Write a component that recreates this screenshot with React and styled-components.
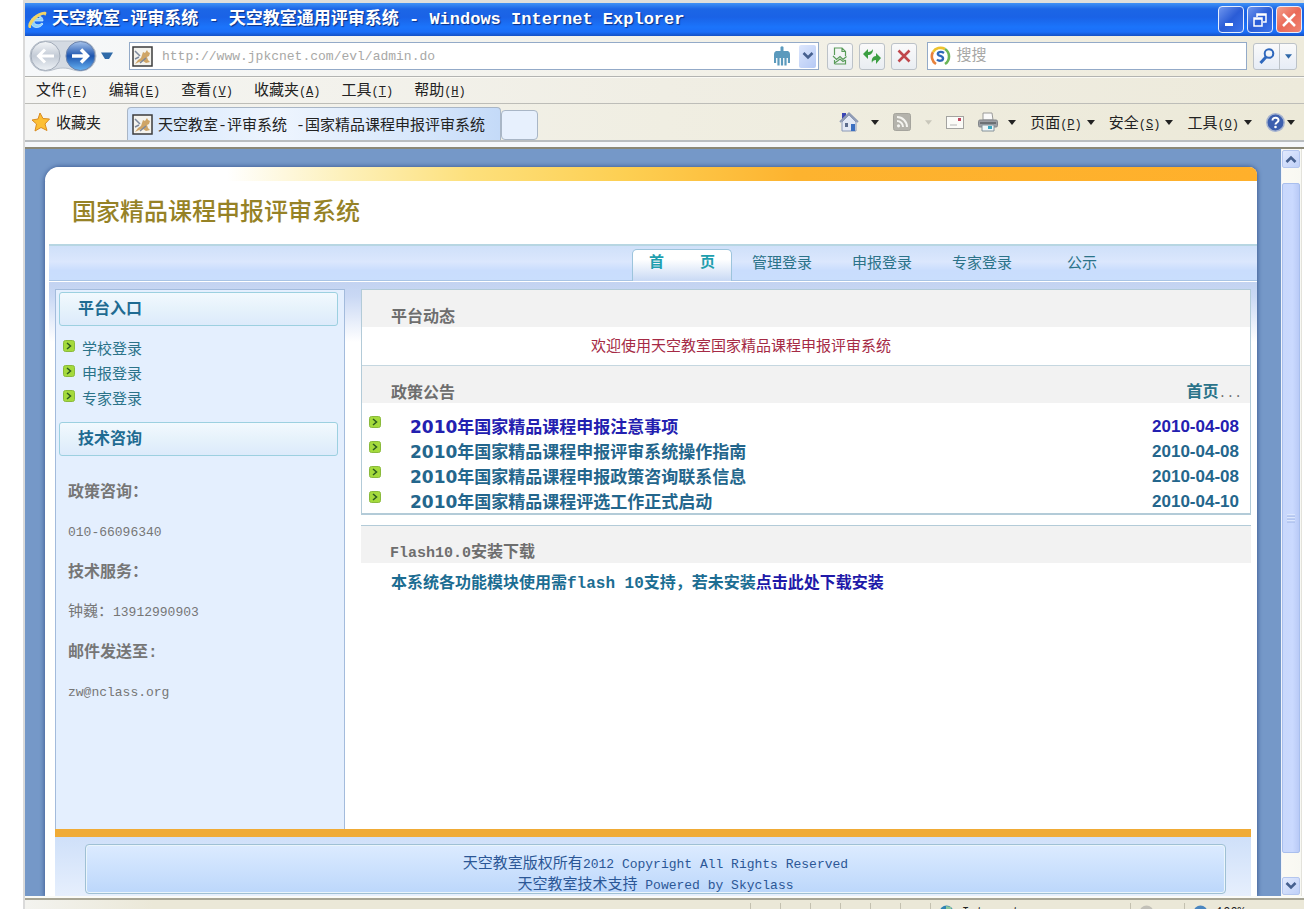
import styled, { createGlobalStyle } from "styled-components";

const GlobalStyle = createGlobalStyle`
  * {
    box-sizing: border-box;
  }
  body {
    margin: 0;
    background: #fff;
    font-family: "Liberation Mono", "Noto Sans CJK SC", monospace;
    font-size: 15px;
    line-height: 20px;
    color: #222;
  }
  button,
  input {
    font: inherit;
    color: inherit;
    margin: 0;
    padding: 0;
    border: 0;
    background: none;
  }
  a {
    color: inherit;
    text-decoration: none;
  }
  ul {
    margin: 0;
    padding: 0;
    list-style: none;
  }
  svg {
    display: block;
    flex: none;
  }
`;

/* ---------- browser window ---------- */

const Window = styled.div`
  display: flex;
  flex-direction: column;
  min-height: 100vh;
  margin-left: 23px;
  border-left: 2px solid #dadada;
  border-top: 3px solid #dfdfdb;
  background: #f0eee2;
`;
const TitleBar = styled.header`
  display: flex;
  align-items: center;
  justify-content: space-between;
  height: 33px;
  padding: 0 2px 0 1px;
  background: linear-gradient(
    #3f92f5 0,
    #1c66e6 6px,
    #1a62e6 14px,
    #1b74fb 24px,
    #1b6ef8 29px,
    #1450c4 33px
  );
`;
const TitleText = styled.div`
  display: flex;
  align-items: center;
  gap: 4px;
  font-size: 17px;
  font-weight: 700;
  color: #fff;
  text-shadow: 1px 1px 1px #0a2f86;
  white-space: nowrap;
`;
const WindowButtons = styled.div`
  display: flex;
  gap: 3px;
`;
const WindowButton = styled.button`
  display: flex;
  align-items: center;
  justify-content: center;
  width: 26px;
  height: 27px;
  border: 1px solid #e6eefc;
  border-radius: 4px;
  background: ${(p) =>
    p.$close
      ? "linear-gradient(135deg, #f3a08c, #ea6a58 50%, #f08472)"
      : "linear-gradient(135deg, #6f96ee, #2a5cd6 50%, #3a74ec)"};
`;
const AddressRow = styled.div`
  display: flex;
  align-items: center;
  height: 41px;
  padding: 0 7px 0 4px;
  border-bottom: 1px solid #b3b4b2;
  background: linear-gradient(90deg, #f6f8fa, #f2f0e6 60%, #eeebdc);
`;
const HistoryButtons = styled.div`
  display: flex;
  align-items: center;
  gap: 3px;
  width: 100px;
`;
const IconButton = styled.button`
  display: flex;
  align-items: center;
  justify-content: center;
`;
const FieldBox = styled.label`
  display: flex;
  align-items: center;
  flex: ${(p) => p.$grow} 1 0;
  min-width: 0;
  height: 28px;
  border: 1px solid #93aac8;
  background: #fff;
  padding: 0 2px;
  gap: ${(p) => p.$gap}px;
`;
const Field = styled.input`
  flex: 1;
  min-width: 0;
  height: 24px;
  font-size: ${(p) => p.$size}px;
  color: #a8a8a6;
  outline: none;
  &::placeholder {
    color: #a8a8a6;
    opacity: 1;
  }
`;
const SelectButton = styled(IconButton)`
  width: 17px;
  height: 23px;
  border-radius: 2px;
  background: linear-gradient(135deg, #dde7fd, #b5c9f5);
`;
const ToolButtons = styled.div`
  display: flex;
  gap: 6px;
  margin: 0 10px 0 8px;
`;
const ToolButton = styled(IconButton)`
  width: 26px;
  height: 27px;
  border: 1px solid #bcc2c8;
  border-radius: 3px;
  background: linear-gradient(#fafafa, #e9edf2);
`;
const SplitButton = styled.div`
  display: flex;
  height: 27px;
  margin-left: 6px;
  border: 1px solid #bcc2c8;
  border-radius: 3px;
  background: linear-gradient(#fafafa, #e6ecf6);
`;
const SplitPart = styled(IconButton)`
  width: ${(p) => p.$width}px;
  & + & {
    border-left: 1px solid #bcc2c8;
  }
`;
const MenuBar = styled.nav`
  display: flex;
  align-items: center;
  gap: 21px;
  height: 27px;
  padding: 3px 0 0 11px;
  border-top: 1px solid #fbfaf4;
  border-bottom: 1px solid #bdbdb8;
  background: linear-gradient(90deg, #f5f5f3, #f0eee4 50%, #edeadb);
`;
const Key = styled.span`
  font-size: 12px;
`;
const TabRow = styled.div`
  display: flex;
  align-items: flex-end;
  height: 38px;
  padding-right: 9px;
  border-bottom: 2px solid #b9bdc0;
  background: linear-gradient(90deg, #f4f4f2, #f0eee2 50%, #ece9d8);
`;
const Favorites = styled.button`
  display: flex;
  align-items: center;
  gap: 5px;
  width: 102px;
  height: 36px;
  padding-left: 6px;
`;
const TabText = styled.span`
  padding-top: 6px;
`;
const PageTab = styled.button`
  display: flex;
  align-items: center;
  gap: 5px;
  min-width: 374px;
  height: 33px;
  padding-left: 4px;
  border: 1px solid #a9b6c6;
  border-bottom: 0;
  border-radius: 4px 4px 0 0;
  background: linear-gradient(90deg, #d3e5fc, #eef5fe 40%, #d6e6fb 80%, #c4daf8);
  white-space: nowrap;
`;
const NewTab = styled.button`
  width: 37px;
  height: 30px;
  border: 1px solid #a9b6c6;
  border-radius: 4px;
  background: #e7f0fd;
`;
const CommandBar = styled.div`
  display: flex;
  flex: 1;
  align-items: center;
  justify-content: flex-end;
  gap: 14px;
  height: 36px;
`;
const Command = styled.button`
  display: flex;
  align-items: center;
  gap: ${(p) => p.$gap || 5}px;
`;
const TabStrip = styled.div`
  height: 7px;
  background: #f5f7fb;
  border-bottom: 2px solid #8b8877;
`;

/* ---------- viewport ---------- */

const Viewport = styled.div`
  display: flex;
  flex: 1;
  background: #7598c8;
`;
const ScrollTrack = styled.div`
  display: flex;
  flex-direction: column;
  width: 23px;
  padding: 1px 4px 1px 1px;
  background: linear-gradient(90deg, #f2f4fa 1px, #fbfaf4 1px, #f8f8f2 20px, #c8c6b8 20px, #fff 21px);
`;
const ScrollArrow = styled.button`
  display: flex;
  align-items: center;
  justify-content: center;
  height: 18px;
  border: 1px solid #b4c6ee;
  border-radius: 2px;
  background: linear-gradient(135deg, #e2eafe, #bfd0f8);
`;
const ScrollThumb = styled.div`
  display: flex;
  align-items: center;
  justify-content: center;
  flex: 1;
  margin: 15px 0 24px;
  border: 1px solid #a9bfee;
  border-radius: 2px;
  background: linear-gradient(90deg, #c9d8fc, #cad9fe 60%, #b9caf6);
`;
const Canvas = styled.div`
  display: flex;
  flex: 1;
  min-width: 0;
  padding: 18px 24px 0 20px;
`;
const Card = styled.div`
  display: flex;
  flex-direction: column;
  flex: 1;
  min-width: 0;
  border-radius: 15px 8px 0 0;
  background: #fff;
  box-shadow: 0 0 4px 1px #45649a;
  clip-path: inset(-6px -6px 0 -6px);
`;
const Banner = styled.div`
  height: 14px;
  border-radius: 15px 8px 0 0;
  background: linear-gradient(
    90deg,
    #fff 15%,
    #fdf0b8 25%,
    #fde07c 35%,
    #fdcf52 48%,
    #fdb32f 62%,
    #ffb02b
  );
`;
const SiteTitle = styled.h1`
  margin: 0;
  padding: 13px 27px 18px;
  font-size: 24px;
  line-height: 32px;
  font-weight: 500;
  font-family: "Noto Sans CJK SC", sans-serif;
  color: #968226;
`;
const NavBar = styled.nav`
  display: flex;
  align-items: flex-end;
  justify-content: flex-end;
  height: 37px;
  margin-left: 4px;
  padding-right: 125px;
  border-top: 2px solid #b7d6e2;
  background: linear-gradient(
    #cfe0f9,
    #dbe7fd 45%,
    #c9ddfd 70%,
    #c9defd 34px,
    #a9c4e4 34px
  );
`;
const NavLink = styled.a`
  width: 100px;
  height: ${(p) => (p.$active ? 32 : 31)}px;
  line-height: 28px;
  text-align: center;
  white-space: pre;
  font-weight: ${(p) => (p.$active ? 700 : 400)};
  color: ${(p) => (p.$active ? "#1f9fae" : "#2b7389")};
  border: ${(p) => (p.$active ? "1px solid #9cc4dc" : "1px solid transparent")};
  border-bottom: 0;
  border-radius: 5px 5px 0 0;
  background: ${(p) =>
    p.$active ? "linear-gradient(#fff 30%, #c8d9f4)" : "none"};
`;
const Body = styled.div`
  display: flex;
  flex: 1;
  margin-left: 4px;
  padding: 7px 6px 0;
  gap: 16px;
  border-top: 1px solid #fff;
  background: linear-gradient(#c3d3f1, #c9d8f4 14px, #fff 60px);
`;
const Sidebar = styled.aside`
  width: 290px;
  padding: 2px 6px 0 3px;
  border: 1px solid #a3bbdc;
  border-bottom: 0;
  background: #e4effe;
`;
const SideHeading = styled.h2`
  margin: 0;
  padding: 2px 0 0 18px;
  font-size: 16px;
  line-height: 30px;
  color: #1f6b92;
  border: 1px solid #9cd0e0;
  border-radius: 3px;
  background: linear-gradient(#f2f9fe, #e6f2fb 50%, #dceafb);
`;
const SideLinks = styled.ul`
  padding: 12px 0 9px 4px;
  color: #2b7389;
`;
const SideItem = styled.li`
  display: flex;
  align-items: center;
  gap: 7px;
  height: 25px;
`;
const Contact = styled.dl`
  margin: 0;
  padding: 17px 0 0 9px;
  color: #767676;
`;
const ContactName = styled.dt`
  font-size: 16px;
  font-weight: 700;
  line-height: 40px;
`;
const ContactValue = styled.dd`
  margin: 0;
  line-height: 40px;
`;
const Latin = styled.span`
  font-size: ${(p) => p.$size || 13}px;
`;
const Main = styled.main`
  flex: 1;
  min-width: 0;
  background: #fff;
`;
const Panel = styled.section`
  border: solid #b3cbd8;
  border-width: ${(p) => (p.$open ? "1px 0 0" : "1px 1px 2px")};
  margin-bottom: 10px;
`;
const PanelHeading = styled.div`
  display: flex;
  justify-content: space-between;
  align-items: flex-end;
  height: 37px;
  padding: 0 8px 0 29px;
  line-height: 18px;
  background: #f2f2f2;
  color: #6e6e6e;
`;
const PanelTitle = styled.h2`
  margin: 0;
  font-size: 16px;
`;
const MoreLink = styled.a`
  font-size: 16px;
  font-weight: 700;
  color: #2b7389;
`;
const Welcome = styled.p`
  margin: 0;
  padding: 4px 130px 0 0;
  line-height: 34px;
  text-align: center;
  color: #a52a45;
  border-bottom: 1px solid #c5d7e0;
`;
const Notices = styled.ul`
  padding: 10px 11px 0 7px;
  font-family: "DejaVu Sans", "Noto Sans CJK SC", sans-serif;
  font-size: 17px;
  font-weight: 700;
`;
const Notice = styled.li`
  display: flex;
  align-items: center;
  height: 25px;
  padding-top: 3px;
  color: ${(p) => (p.$fresh ? "#2320b0" : "#24668c")};
`;
const NoticeLink = styled.a`
  flex: 1;
  margin-left: 29px;
`;
const NoticeDate = styled.time`
  font-family: "Liberation Sans", sans-serif;
`;
const BulletWrap = styled.span`
  padding-bottom: 10px;
`;
const FlashNote = styled.p`
  margin: 0;
  padding: 9px 0 0 30px;
  font-size: 16px;
  line-height: 24px;
  font-weight: 700;
  color: #1c6d92;
`;
const DownloadLink = styled.a`
  color: #2019a8;
`;
const Footer = styled.footer`
  margin: 0 6px 0 10px;
  padding: 7px 25px 2px 30px;
  border-top: 8px solid #f0ab36;
  background: linear-gradient(#cfe0f9, #e6effd);
`;
const FooterBox = styled.div`
  padding: 9px 0 0;
  height: 50px;
  line-height: 21px;
  text-align: center;
  color: #2b5796;
  border: 1px solid #9fc0d4;
  border-radius: 4px;
  box-shadow: inset 0 0 0 1px #eaf5fb;
  background: linear-gradient(#dcebff, #bcd7fb);
`;
const StatusBar = styled.div`
  flex: none;
  display: flex;
  justify-content: flex-end;
  height: 13px;
  overflow: hidden;
  border-top: 2px solid #fbfbf7;
  box-shadow: inset 0 2px 0 #a7a595;
  background: linear-gradient(90deg, #f3f3ef, #ebe8d8 10%, #ebe8d8);
`;
const StatusCell = styled.div`
  display: flex;
  align-items: flex-start;
  gap: 8px;
  width: ${(p) => p.$width}px;
  height: 26px;
  margin-top: 5px;
  padding: 2px 0 0 8px;
  border-left: 1px solid #c3c0b0;
  font-size: 12px;
  line-height: 16px;
`;

/* ---------- icons ---------- */

const Caret = ({ color = "#222", size = 8 }) => (
  <svg width={size} height="5" viewBox="0 0 8 5">
    <path d="M0 0h8L4 5z" fill={color} />
  </svg>
);

const Bullet = () => (
  <svg width="12" height="12" viewBox="0 0 12 12">
    <rect x=".5" y=".5" width="11" height="11" rx="2" fill="#a4da3c" stroke="#8aba3c" />
    <path d="M4 3l3.500 3L4 9" fill="none" stroke="#2c5a20" strokeWidth="1.500" />
  </svg>
);

const SiteIcon = () => (
  <svg width="21" height="21" viewBox="0 0 21 21">
    <rect x="1" y="1" width="19" height="19" fill="#f4f3ee" stroke="#3c3c3c" strokeWidth="1.500" />
    <path d="M11 6l2 1 2-3 1 2 2 1-1 3-2 1 1 3 2 2-4 1-3-2-4 1-4 2 3-4 3-2 1-3z" fill="#cfa566" />
    <path d="M3 5l5 5M8 17l6-5M3 13l4-2" stroke="#7d889c" strokeWidth="1.500" fill="none" />
  </svg>
);

const IeLogo = () => (
  <svg width="22" height="22" viewBox="0 0 22 22">
    <path
      d="M17 12H8c0 4 5 5 8 2l1 1c-4 6-13 4-12-3 1-6 12-8 12 0zM9 9.500h5c0-3-4-3-5 0z"
      fill="#8fd3fb"
      stroke="#d9f1ff"
      strokeWidth=".7"
    />
    <path d="M3 19C-1 14 12 1 20 3c1 1 0 3-1 4 0-5-15 5-14 12z" fill="#f0d468" />
  </svg>
);

const History = () => (
  <svg width="68" height="34" viewBox="0 0 68 34">
    <defs>
      <linearGradient id="back" x1="0" y1="0" x2="0" y2="1">
        <stop offset="0" stopColor="#f4f6f8" />
        <stop offset=".5" stopColor="#c3cbd6" />
        <stop offset="1" stopColor="#eef2f6" />
      </linearGradient>
      <linearGradient id="forward" x1="0" y1="0" x2="0" y2="1">
        <stop offset="0" stopColor="#a9c5ec" />
        <stop offset=".5" stopColor="#1d54ae" />
        <stop offset="1" stopColor="#67b2f2" />
      </linearGradient>
    </defs>
    <path d="M16 2h36a15 15 0 0 1 0 30c-8 0-10-3-18-3s-10 3-18 3a15 15 0 0 1 0-30z" fill="#d4dae2" stroke="#b9c1cb" />
    <circle cx="16.500" cy="17" r="14.500" fill="url(#back)" stroke="#a2abb8" />
    <circle cx="51.500" cy="17" r="14.500" fill="url(#forward)" stroke="#6b83ac" />
    <path d="M25 17H10M16 10.500L9.500 17l6.500 6.500" fill="none" stroke="#fff" strokeWidth="3" />
    <path d="M43 17h15M52 10.500l6.500 6.500-6.500 6.500" fill="none" stroke="#fff" strokeWidth="3.500" />
  </svg>
);

const Broom = () => (
  <svg width="16" height="20" viewBox="0 0 16 20">
    <path d="M6.500 1q1.500-1.500 3 0v4H14q2 1 2 3v4H0V8q0-2 2-3h4.500z" fill="#5b9abd" />
    <path d="M1 11v6M4.500 11v8.500M8 11v8.500M11.500 11v8.500M15 11v6" stroke="#5b9abd" strokeWidth="2.200" />
  </svg>
);

const Chevron = ({ up, color = "#46608f" }) => (
  <svg width="12" height="8" viewBox="0 0 12 8">
    <path d={up ? "M1.500 7L6 2.500 10.500 7" : "M1.500 1L6 5.500 10.500 1"} fill="none" stroke={color} strokeWidth="2.600" />
  </svg>
);

const CompatIcon = () => (
  <svg width="16" height="18" viewBox="0 0 16 18" fill="none" stroke="#5a9c5a" strokeWidth="1.200">
    <path d="M2.500 8V1H10l3.500 3.500V9M10 1v3.500h3.500" />
    <path d="M1 9l3.500 3.500L8 9.500l3 3 3.500-3" />
    <path d="M2.500 17v-4M2.500 17h11v-4M2.500 16l3-2 2.500-2 3 2.500 2.500-1.500" />
  </svg>
);

const RefreshIcon = () => (
  <svg width="18" height="18" viewBox="0 0 18 18" fill="#3c9f42">
    <path d="M0 7l5-5v3c2 0 4-1 5-3 0 4-2 6-5 6v4z" />
    <path d="M18 11l-5 6v-4c-2 0-4 1-4 3-1-4 1-7 4-7V6z" />
  </svg>
);

const StopIcon = () => (
  <svg width="14" height="14" viewBox="0 0 14 14">
    <path d="M1.500 1.500l11 11M12.500 1.500l-11 11" stroke="#c0474c" strokeWidth="2.600" />
  </svg>
);

const SosoIcon = () => (
  <svg width="21" height="21" viewBox="0 0 21 21" fill="none" strokeWidth="2.600">
    <path d="M6 18A9 9 0 0 1 3 6" stroke="#e8823c" />
    <path d="M3 6a9 9 0 0 1 12-3" stroke="#edc32e" />
    <path d="M15 3a9 9 0 0 1 0 15" stroke="#6bb557" />
    <path d="M14 7c-3-2-7-1-6 1.500 1 2 5 1 5 4 0 2.500-4 3-6 1" stroke="#2c67b8" strokeWidth="2.400" />
  </svg>
);

const SearchIcon = () => (
  <svg width="16" height="16" viewBox="0 0 16 16" fill="none" stroke="#2f68bd">
    <circle cx="10" cy="5.500" r="4.300" strokeWidth="2" />
    <path d="M7 9l-5.500 6" strokeWidth="3" />
  </svg>
);

const StarIcon = () => (
  <svg width="20" height="20" viewBox="0 0 20 20">
    <path
      d="M9 1l3 5.500 6.500.5-4.500 5 2 6.500-6-3-6 3.500 1.500-7L1 8l6-1z"
      fill="#fcbf35"
      stroke="#d98b20"
      strokeLinejoin="round"
    />
  </svg>
);

const HomeIcon = () => (
  <svg width="20" height="20" viewBox="0 0 20 20">
    <path d="M3 1h4v6H3z" fill="#3a46b4" />
    <path d="M3 10l7-7 7 7v9H3z" fill="#e3e9f4" stroke="#8b99b8" />
    <path d="M1 10l9-8.500 9 8.500" fill="none" stroke="#8f9bb4" strokeWidth="2" />
    <path d="M12 12h4v7h-4z" fill="#3b6fc0" />
    <path d="M6 11h3v4H6z" fill="#5c6c8c" />
  </svg>
);

const RssIcon = () => (
  <svg width="18" height="18" viewBox="0 0 18 18">
    <rect x=".5" y=".5" width="17" height="17" rx="2" fill="#b4b3ac" stroke="#a5a49d" />
    <path d="M4 4a10 10 0 0 1 10 10M4 8a6 6 0 0 1 6 6" fill="none" stroke="#f4f4f0" strokeWidth="2" />
    <circle cx="5.500" cy="12.800" r="1.600" fill="#f4f4f0" />
  </svg>
);

const MailIcon = () => (
  <svg width="18" height="13" viewBox="0 0 18 13">
    <rect x=".5" y=".5" width="17" height="12" fill="#fbfbf7" stroke="#a3a3a0" />
    <rect x="12" y="2" width="3" height="3" fill="#c04860" />
    <path d="M4 9h7" stroke="#b5b5b5" />
  </svg>
);

const PrinterIcon = () => (
  <svg width="20" height="20" viewBox="0 0 20 20">
    <path d="M5 1h9l1 7H5z" fill="#fafafa" stroke="#9a9a98" />
    <rect x=".5" y="8" width="19" height="7" rx="1.500" fill="#9c9fa4" stroke="#83868a" />
    <path d="M2 11h16" stroke="#6c7074" strokeWidth="2" />
    <path d="M4 13h12v6H4z" fill="#eef6f8" stroke="#85929a" />
    <path d="M10 14h4v3h-4z" fill="#3aa6bf" />
  </svg>
);

const HelpIcon = () => (
  <svg width="19" height="19" viewBox="0 0 19 19">
    <circle cx="9.500" cy="9.500" r="8.700" fill="#3c5fae" stroke="#a7b4d0" strokeWidth="1.500" />
    <path d="M6.500 7.500c0-4 6.500-3.500 6 0-.3 2-3 2-3 4" fill="none" stroke="#fff" strokeWidth="2" />
    <circle cx="9.500" cy="14" r="1.300" fill="#fff" />
  </svg>
);

const Ball = ({ fill }) => (
  <svg width="15" height="15" viewBox="0 0 15 15">
    <circle cx="7.500" cy="7.500" r="7" fill={fill} />
    <path d="M7 1l5 1 1 4-4 1-2-2z" fill="#8dc79b" opacity={fill === "#2f84b4" ? 1 : 0} />
  </svg>
);

/* ---------- data ---------- */

const menus = [
  ["文件", "F"],
  ["编辑", "E"],
  ["查看", "V"],
  ["收藏夹", "A"],
  ["工具", "T"],
  ["帮助", "H"],
];

const commands = [
  ["页面", "P"],
  ["安全", "S"],
  ["工具", "O"],
];

const navItems = ["首\u00a0\u00a0\u00a0\u00a0页", "管理登录", "申报登录", "专家登录", "公示"];

const entries = ["学校登录", "申报登录", "专家登录"];

const notices = [
  { title: "2010年国家精品课程申报注意事项", date: "2010-04-08", fresh: true },
  { title: "2010年国家精品课程申报评审系统操作指南", date: "2010-04-08" },
  { title: "2010年国家精品课程申报政策咨询联系信息", date: "2010-04-08" },
  { title: "2010年国家精品课程评选工作正式启动", date: "2010-04-10" },
];

const Label = ({ text, mnemonic }) => (
  <>
    {text}
    <Key>
      (<u>{mnemonic}</u>)
    </Key>
  </>
);

const BrowserChrome = () => (
  <>
    <TitleBar>
      <TitleText>
        <IeLogo />
        天空教室-评审系统 - 天空教室通用评审系统 - Windows Internet Explorer
      </TitleText>
      <WindowButtons>
        <WindowButton aria-label="最小化">
          <svg width="16" height="16" viewBox="0 0 16 16">
            <path d="M2 11h8v3H2z" fill="#fff" />
          </svg>
        </WindowButton>
        <WindowButton aria-label="还原">
          <svg width="16" height="16" viewBox="0 0 16 16" fill="none" stroke="#fff" strokeWidth="1.500">
            <path d="M5 5V2h9v8h-3M2 6h8v8H2zM2 7h8M5 3h9" />
          </svg>
        </WindowButton>
        <WindowButton $close aria-label="关闭">
          <svg width="16" height="16" viewBox="0 0 16 16">
            <path d="M2 2l12 12M14 2L2 14" stroke="#fff" strokeWidth="2.500" />
          </svg>
        </WindowButton>
      </WindowButtons>
    </TitleBar>
    <AddressRow>
      <HistoryButtons>
        <IconButton aria-label="后退和前进">
          <History />
        </IconButton>
        <IconButton aria-label="历史记录">
          <svg width="14" height="10" viewBox="0 0 14 10">
            <path d="M1 1.500h12L9 8H5z" fill="#2f6aa8" />
          </svg>
        </IconButton>
      </HistoryButtons>
      <FieldBox $grow={692} $gap={9}>
        <SiteIcon />
        <Field $size={13} aria-label="地址" defaultValue="http://www.jpkcnet.com/evl/admin.do" />
        <Broom />
        <SelectButton aria-label="显示地址">
          <Chevron />
        </SelectButton>
      </FieldBox>
      <ToolButtons>
        <ToolButton aria-label="兼容性视图">
          <CompatIcon />
        </ToolButton>
        <ToolButton aria-label="刷新">
          <RefreshIcon />
        </ToolButton>
        <ToolButton aria-label="停止">
          <StopIcon />
        </ToolButton>
      </ToolButtons>
      <FieldBox $grow={317} $gap={5}>
        <SosoIcon />
        <Field $size={15} aria-label="搜索" placeholder="搜搜" />
      </FieldBox>
      <SplitButton>
        <SplitPart $width={25} aria-label="搜索">
          <SearchIcon />
        </SplitPart>
        <SplitPart $width={17} aria-label="搜索选项">
          <Caret color="#2f68a8" size={7} />
        </SplitPart>
      </SplitButton>
    </AddressRow>
    <MenuBar>
      {menus.map(([text, key]) => (
        <button key={key}>
          <Label text={text} mnemonic={key} />
        </button>
      ))}
    </MenuBar>
    <TabRow>
      <Favorites>
        <StarIcon />
        <TabText>收藏夹</TabText>
      </Favorites>
      <PageTab>
        <SiteIcon />
        <TabText>天空教室-评审系统 -国家精品课程申报评审系统</TabText>
      </PageTab>
      <NewTab aria-label="新选项卡" />
      <CommandBar>
        <Command $gap={12} aria-label="主页">
          <HomeIcon />
          <Caret />
        </Command>
        <Command $gap={14} aria-label="源">
          <RssIcon />
          <Caret color="#c9c7bb" size={7} />
        </Command>
        <Command aria-label="阅读邮件">
          <MailIcon />
        </Command>
        <Command $gap={10} aria-label="打印">
          <PrinterIcon />
          <Caret />
        </Command>
        {commands.map(([text, key]) => (
          <Command key={key}>
            <TabText>
              <Label text={text} mnemonic={key} />
            </TabText>
            <Caret />
          </Command>
        ))}
        <Command $gap={2} aria-label="帮助">
          <HelpIcon />
          <Caret />
        </Command>
      </CommandBar>
    </TabRow>
    <TabStrip />
  </>
);

const SidebarContent = () => (
  <Sidebar>
    <SideHeading>平台入口</SideHeading>
    <SideLinks>
      {entries.map((name) => (
        <SideItem key={name}>
          <BulletWrap>
            <Bullet />
          </BulletWrap>
          <a href="#login">{name}</a>
        </SideItem>
      ))}
    </SideLinks>
    <SideHeading>技术咨询</SideHeading>
    <Contact>
      <ContactName>政策咨询：</ContactName>
      <ContactValue>
        <Latin>010-66096340</Latin>
      </ContactValue>
      <ContactName>技术服务：</ContactName>
      <ContactValue>
        钟巍：<Latin>13912990903</Latin>
      </ContactValue>
      <ContactName>邮件发送至:</ContactName>
      <ContactValue>
        <Latin>zw@nclass.org</Latin>
      </ContactValue>
    </Contact>
  </Sidebar>
);

const MainContent = () => (
  <Main>
    <Panel>
      <PanelHeading>
        <PanelTitle>平台动态</PanelTitle>
      </PanelHeading>
      <Welcome>欢迎使用天空教室国家精品课程申报评审系统</Welcome>
      <PanelHeading>
        <PanelTitle>政策公告</PanelTitle>
        <span>
          <MoreLink href="#more">首页</MoreLink>
          <Latin>...</Latin>
        </span>
      </PanelHeading>
      <Notices>
        {notices.map(({ title, date, fresh }) => (
          <Notice key={title} $fresh={fresh}>
            <BulletWrap>
              <Bullet />
            </BulletWrap>
            <NoticeLink href="#notice">{title}</NoticeLink>
            <NoticeDate>{date}</NoticeDate>
          </Notice>
        ))}
      </Notices>
    </Panel>
    <Panel $open>
      <PanelHeading>
        <PanelTitle>
          <Latin $size={15}>Flash10.0</Latin>安装下载
        </PanelTitle>
      </PanelHeading>
      <FlashNote>
        本系统各功能模块使用需flash 10支持，若未安装
        <DownloadLink href="#flash">点击此处下载安装</DownloadLink>
      </FlashNote>
    </Panel>
  </Main>
);

const App = () => (
  <>
    <GlobalStyle />
    <Window>
      <BrowserChrome />
      <Viewport>
        <Canvas>
          <Card>
            <Banner />
            <SiteTitle>国家精品课程申报评审系统</SiteTitle>
            <NavBar>
              {navItems.map((name, i) => (
                <NavLink key={name} href="#nav" $active={i === 0}>
                  {name}
                </NavLink>
              ))}
            </NavBar>
            <Body>
              <SidebarContent />
              <MainContent />
            </Body>
            <Footer>
              <FooterBox>
                天空教室版权所有<Latin>2012 Copyright All Rights Reserved</Latin>
                <br />
                天空教室技术支持<Latin> Powered by Skyclass</Latin>
              </FooterBox>
            </Footer>
          </Card>
        </Canvas>
        <ScrollTrack>
          <ScrollArrow aria-label="向上滚动">
            <Chevron up />
          </ScrollArrow>
          <ScrollThumb>
            <svg width="8" height="9" viewBox="0 0 8 9">
              <path d="M0 1h8M0 4h8M0 7h8" stroke="#eef4ff" />
              <path d="M0 2h8M0 5h8M0 8h8" stroke="#9db4e6" />
            </svg>
          </ScrollThumb>
          <ScrollArrow aria-label="向下滚动">
            <Chevron />
          </ScrollArrow>
        </ScrollTrack>
      </Viewport>
      <StatusBar>
        {[30, 30, 30, 30, 30, 30].map((w, i) => (
          <StatusCell key={i} $width={w} />
        ))}
        <StatusCell $width={200}>
          <Ball fill="#2f84b4" />
          Internet
        </StatusCell>
        <StatusCell $width={54}>
          <Ball fill="#c2c0b8" />
        </StatusCell>
        <StatusCell $width={120}>
          <Ball fill="#4a86c0" />
          100%
        </StatusCell>
      </StatusBar>
    </Window>
  </>
);

export default App;
